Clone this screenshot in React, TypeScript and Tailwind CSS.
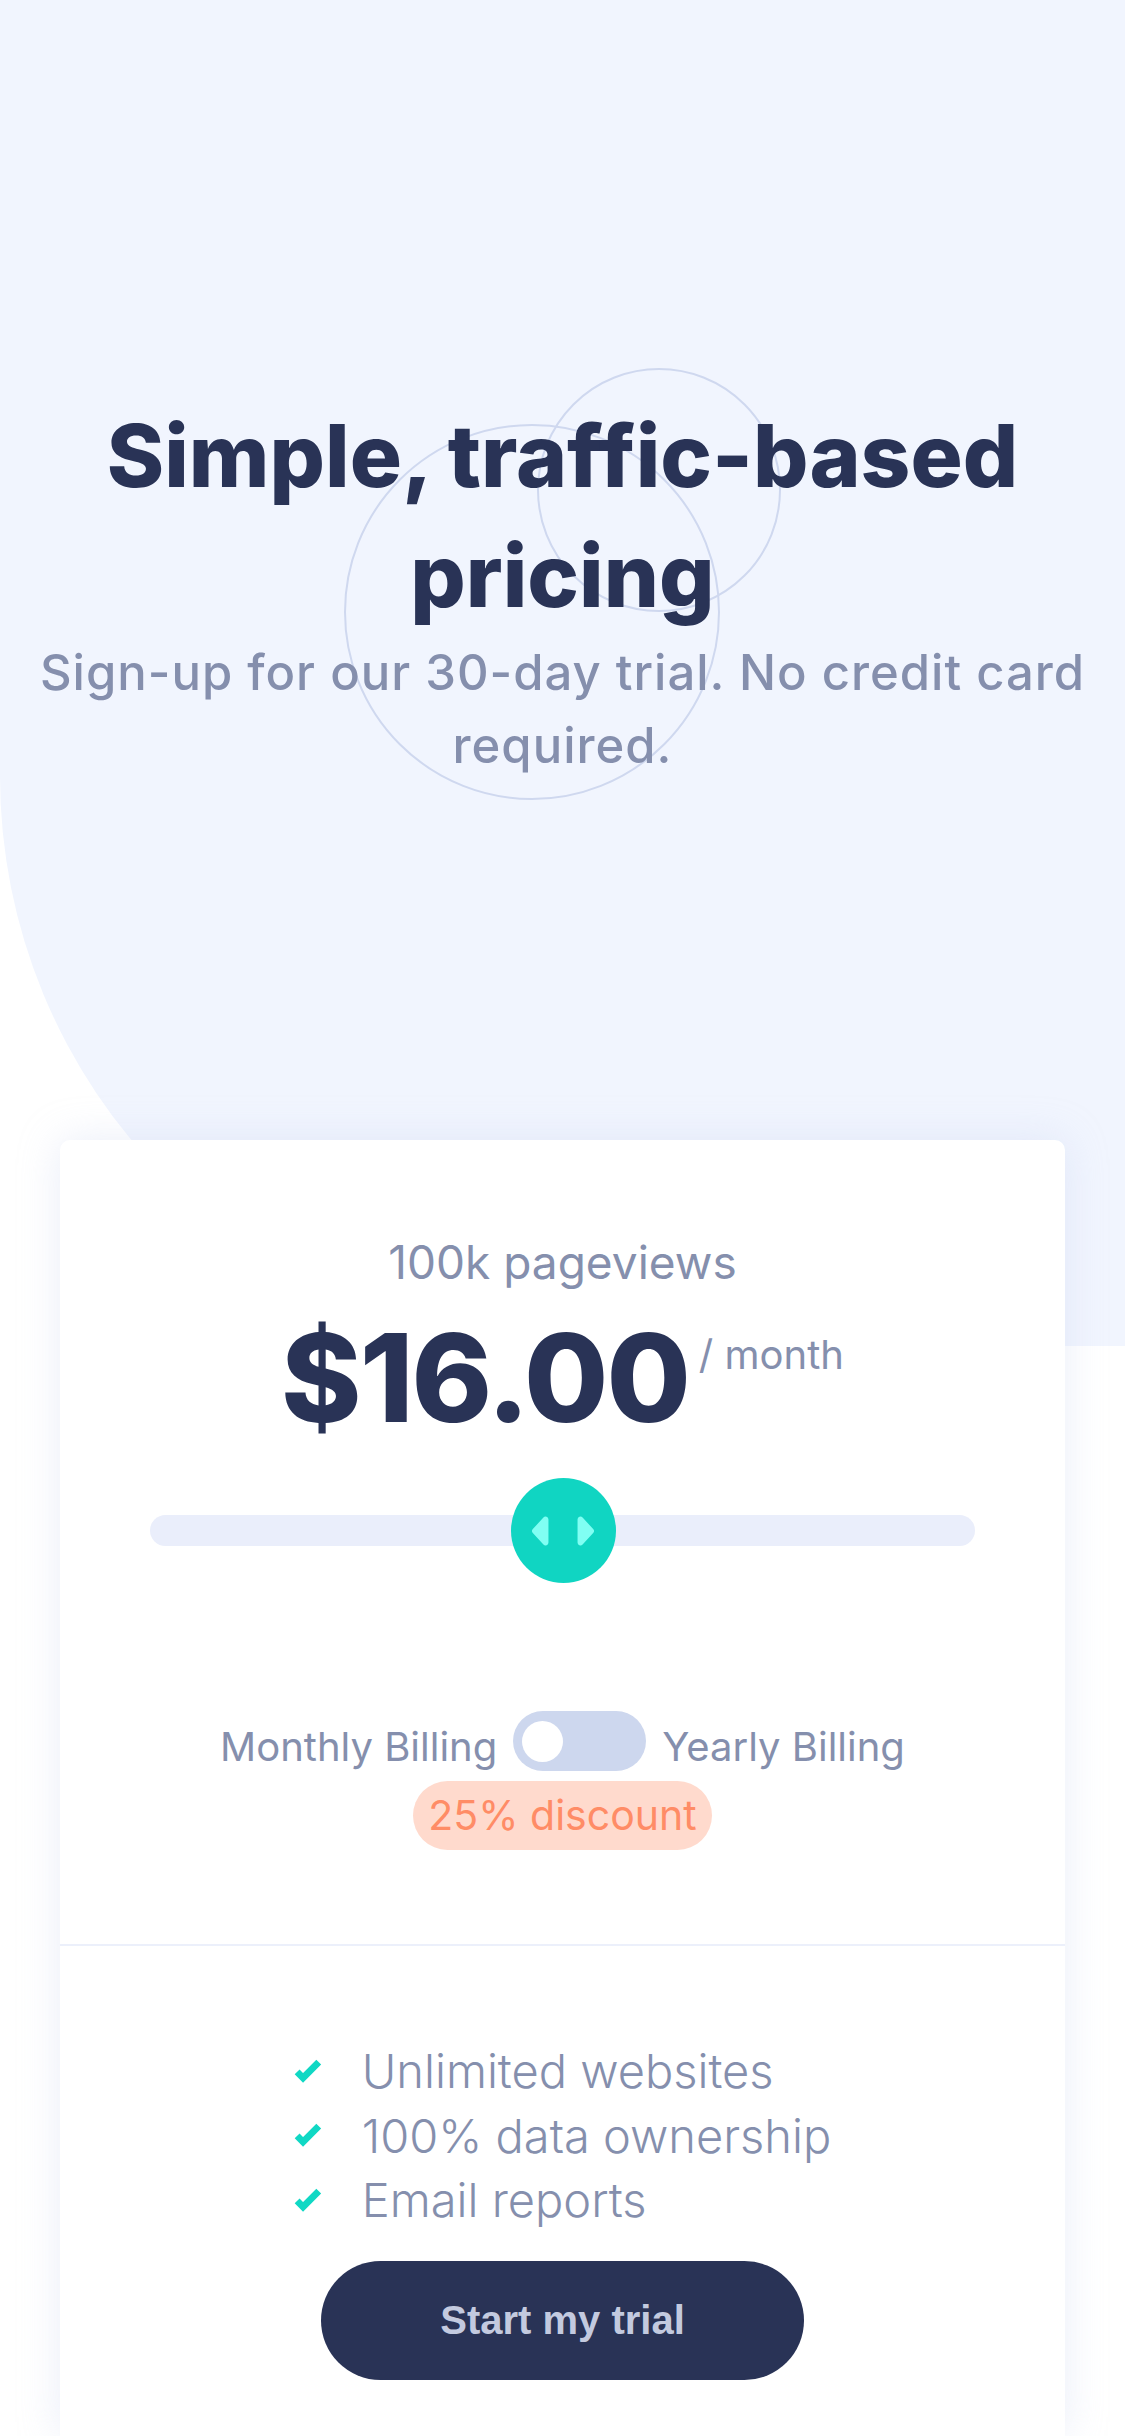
import React from "react";

function Check() {
  return (
    <svg width="28" height="25" viewBox="0 0 9 8" className="shrink-0">
      <path d="M1 4.134l1.907 1.908L7.949 1" fill="none" stroke="#10D8C4" strokeWidth="2.2" />
    </svg>
  );
}

function SliderIcon() {
  return (
    <svg width="64" height="38" viewBox="0 0 22 13">
      <path
        fill="#80FFF3"
        fillRule="evenodd"
        d="M16 2.558v7.884a1 1 0 001.735.679l3.639-3.943a1 1 0 000-1.356l-3.64-3.943A1 1 0 0016 2.558zM6 2.558v7.884a1 1 0 01-1.735.679L.626 7.178a1 1 0 010-1.356l3.64-3.943A1 1 0 016 2.558z"
      />
    </svg>
  );
}

export default function App() {
  const features = ["Unlimited websites", "100% data ownership", "Email reports"];
  return (
    <div className="relative min-h-[2436px] w-full overflow-hidden bg-white font-['Inter','Noto_Sans',sans-serif]">
      {/* background shape */}
      <div className="absolute left-0 top-0 h-[1346px] w-full rounded-bl-[570px] bg-[#f1f5fe]" />
      {/* decorative circles */}
      <svg className="absolute left-0 top-0" width="1125" height="900" viewBox="0 0 1125 900">
        <circle cx="659" cy="490" r="121" fill="none" stroke="#cfd8ef" strokeWidth="2" />
        <circle cx="532" cy="612" r="187" fill="none" stroke="#cfd8ef" strokeWidth="2" />
      </svg>

      <header className="relative pt-[396px] text-center">
        <h1 className="text-[87px] font-extrabold leading-[120px] text-[#293356]">
          Simple, traffic-based pricing
        </h1>
        <p className="text-[49px] font-medium leading-[73px] tracking-[1px] text-[#858fad]">
          Sign-up for our 30-day trial. No credit card required.
        </p>
      </header>

      <main className="relative mx-[60px] mt-[358px] rounded-t-[10px] bg-white shadow-[0_0_40px_rgba(196,206,238,0.35)]">
        <section className="flex flex-col items-center pb-[94px] pt-[94px]">
          <p className="text-[46px] font-normal leading-[56px] text-[#858fad]">100k pageviews</p>
          <div className="mt-[27px] flex items-start">
            <span className="text-[122px] font-extrabold leading-[122px] tracking-[-2px] text-[#293356]">
              $16.00
            </span>
            <span className="ml-[10px] mt-[18px] text-[40px] leading-[40px] text-[#858fad]">/ month</span>
          </div>
          <div className="mt-[39px] w-full px-[90px]">
            <div className="relative flex h-[105px] items-center">
              <div className="h-[31px] w-full rounded-full bg-[#eaeefb]" />
              <div className="absolute left-[calc(50%-52px)] top-0 flex h-[105px] w-[105px] items-center justify-center rounded-full bg-[#10d5c2]">
                <SliderIcon />
              </div>
            </div>
          </div>
          <div className="mt-[122px] flex items-center gap-[16px] text-[40px] text-[#858fad]">
            <span className="pt-[12px] leading-[60px]">Monthly Billing</span>
            <div className="flex h-[60px] w-[133px] items-center rounded-full bg-[#cdd7ee] pl-[9px]">
              <div className="h-[41px] w-[41px] rounded-full bg-white" />
            </div>
            <span className="pt-[12px] leading-[60px]">Yearly Billing</span>
          </div>
          <div className="mt-[4px] flex h-[69px] items-center rounded-full bg-[#ffdacd] px-[15px] text-[41px] text-[#ff8c66]">
            25% discount
          </div>
        </section>
        <div className="h-[2px] bg-[#ecf0fb]" />
        <section className="flex flex-col items-center pb-[56px] pt-[93px]">
          <ul className="flex flex-col">
            {features.map((f) => (
              <li key={f} className="flex h-[64.5px] items-center">
                <Check />
                <span className="ml-[40px] text-[47px] font-light leading-[64px] text-[#858fad]">{f}</span>
              </li>
            ))}
          </ul>
          <button className="mt-[28px] flex h-[119px] w-[483px] items-center justify-center rounded-full bg-[#293356] font-['Liberation_Sans',Arial,sans-serif] text-[40px] font-bold text-[#c3cadf]">
            Start my trial
          </button>
        </section>
      </main>
    </div>
  );
}
